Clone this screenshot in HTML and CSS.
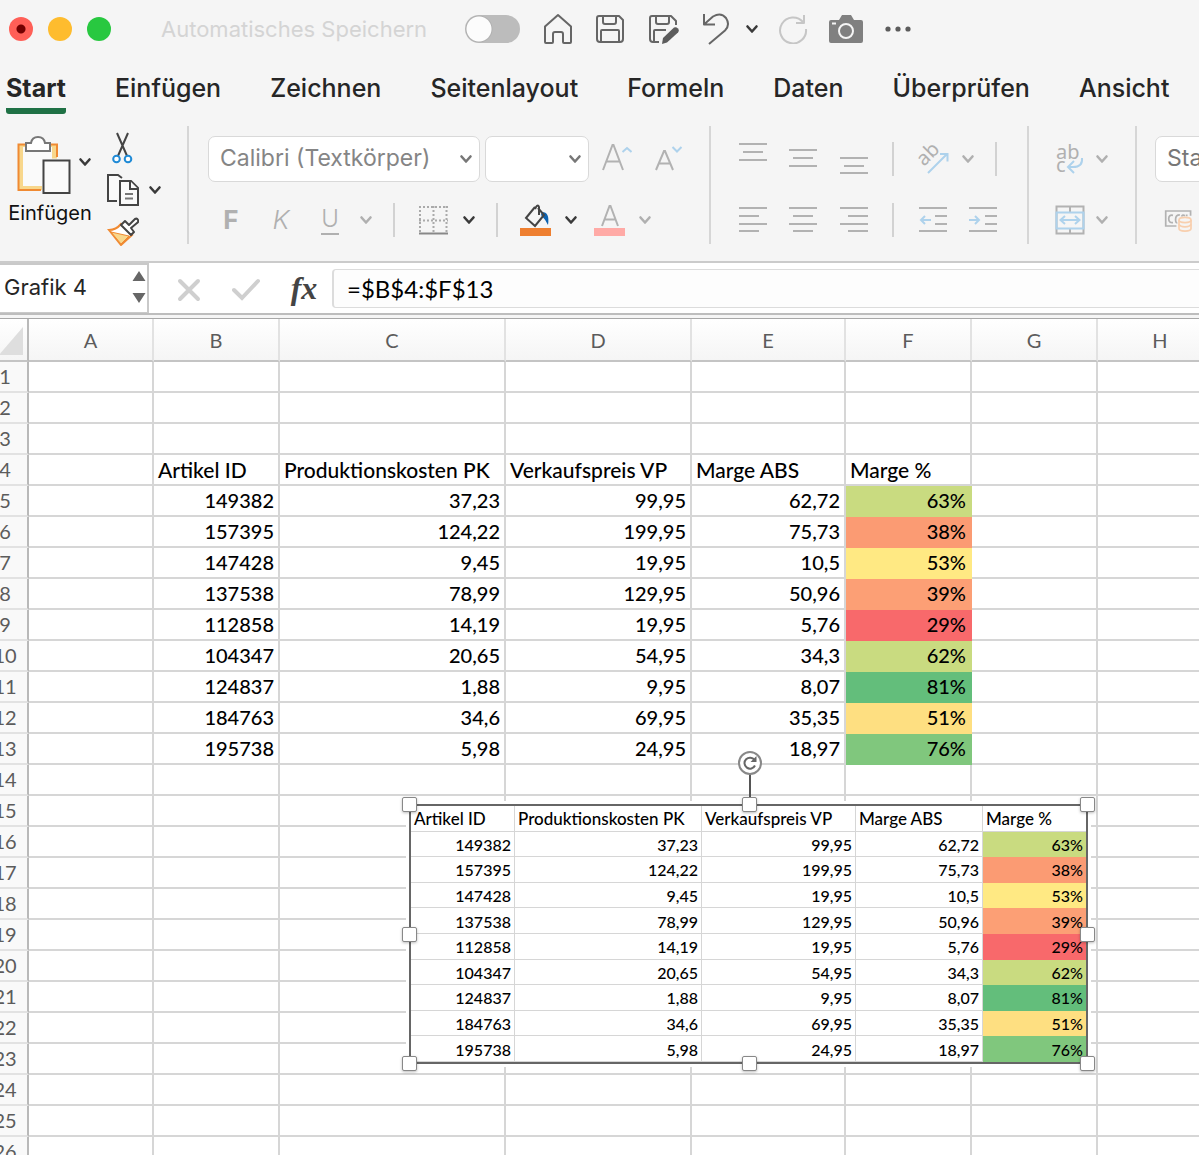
FILE: index.html
```html
<!DOCTYPE html>
<html lang="de">
<head>
<meta charset="utf-8">
<meta name="viewport" content="width=device-width, initial-scale=1">
<title>Tabelle</title>
<link rel="stylesheet" href="styles.css">
</head>
<body>
<svg class="defs" aria-hidden="true">
  <symbol id="chev" viewBox="0 0 14 10"><path d="M2.500 2.500 7 7.500l4.500-5" fill="none" stroke="currentColor" stroke-width="2.600" stroke-linecap="round" stroke-linejoin="round"/></symbol>
</svg>

<header class="titlebar">
  <div class="lights">
    <button class="light close" aria-label="Schließen"></button>
    <button class="light minimize" aria-label="Minimieren"></button>
    <button class="light zoom" aria-label="Zoomen"></button>
  </div>
  <label class="autosave"><span>Automatisches Speichern</span><input type="checkbox" disabled></label>
  <div class="quick">
    <button aria-label="Startseite"><svg width="30" height="32" viewBox="0 0 30 32"><path d="M2 13.500 15 2l13 11.500V29q0 1-1 1h-6q-1 0-1-1v-8q0-2-2-2h-6q-2 0-2 2v8q0 1-1 1H3q-1 0-1-1z"/></svg></button>
    <button aria-label="Speichern"><svg width="30" height="30" viewBox="0 0 30 30"><path d="M4 2h20l4 4v19q0 3-3 3H5q-3 0-3-3V4q0-2 2-2zM8 2v6q0 2 2 2h9q2 0 2-2V2M6 28V17q0-1 1-1h16q1 0 1 1v11"/></svg></button>
    <button aria-label="Kopie speichern"><svg width="31" height="30" viewBox="0 0 31 30"><path d="M11 28H5q-3 0-3-3V4q0-2 2-2h19l5 5v4M8 2v6q0 2 2 2h9q2 0 2-2V2M6 28V17q0-1 1-1h11"/><path class="solid" d="M14 30l1-6L26 13.500q2-1 4 1 1.500 2 0 4L19 28.500z"/></svg></button>
    <button aria-label="Rückgängig"><svg width="28" height="32" viewBox="0 0 28 32"><path d="M2 1v10.500h11M2.500 11 11 3.500q8-4.500 13 1.500 4.500 7-1 12.500L7 31"/></svg></button>
    <button class="dark" aria-label="Rückgängig-Liste"><svg width="14" height="10"><use href="#chev"/></svg></button>
    <button class="faint" aria-label="Wiederholen"><svg width="30" height="30" viewBox="0 0 30 30"><path d="M25 8A13 13 0 1 0 28 15M26 1v8h-8"/></svg></button>
    <button aria-label="Kamera"><svg width="36" height="30" viewBox="0 0 36 30"><path class="body" d="M3 6h8l3-5h9l3 5h7q2 0 2 2v19q0 2-2 2H3q-2 0-2-2V8q0-2 2-2z"/><circle class="cut" cx="18" cy="17" r="7"/><path class="cut" d="M4 9.500h4"/></svg></button>
    <button aria-label="Mehr"><svg width="26" height="8" viewBox="0 0 26 8"><circle class="solid" cx="3" cy="4" r="2.600"/><circle class="solid" cx="13" cy="4" r="2.600"/><circle class="solid" cx="23" cy="4" r="2.600"/></svg></button>
  </div>
</header>

<nav class="tabs">
  <a href="#start" class="active">Start</a>
  <a href="#einfuegen">Einfügen</a>
  <a href="#zeichnen">Zeichnen</a>
  <a href="#seitenlayout">Seitenlayout</a>
  <a href="#formeln">Formeln</a>
  <a href="#daten">Daten</a>
  <a href="#ueberpruefen">Überprüfen</a>
  <a href="#ansicht">Ansicht</a>
</nav>

<section class="ribbon" id="start">
  <div class="group clipboard">
    <button class="paste">
      <span class="paste-icon">
        <svg width="54" height="60" viewBox="0 0 54 60"><path d="M1.500 8.500H40v14H25V54H1.500z" fill="#f8d78c"/><path d="M6 11h29v12H25v27H6z" fill="#fafafa"/><path d="M40 21V8.500H1.500V54H24" fill="none" stroke="#f08a32" stroke-width="2"/><path d="M9 15V7h5q1-6 7-6t7 6h5v8z" fill="#fff" stroke="#777" stroke-width="2"/><path d="M26.500 24.500h26V57h-26z" fill="#fafafa" stroke="#444" stroke-width="2"/></svg>
        <svg class="dark chev" width="14" height="10"><use href="#chev"/></svg>
      </span>
      <span>Einfügen</span>
    </button>
    <div class="clip-tools">
      <button aria-label="Ausschneiden"><svg width="32" height="32" viewBox="0 0 32 32"><path d="M10 1l10.500 24M21 1 10.500 25" stroke="#444" stroke-width="2" fill="none"/><g fill="#fff" stroke="#1f8ad6" stroke-width="2"><circle cx="9.500" cy="27" r="3.300"/><circle cx="21" cy="27" r="3.300"/></g></svg></button>
      <button aria-label="Kopieren"><svg width="32" height="32" viewBox="0 0 32 32"><g fill="#fafafa" stroke="#444" stroke-width="2"><path d="M10 27H1V1h10l4 3" /><path d="M13 7h11l7 7v17H13z"/><path d="M23 7v8h8"/></g><path d="M18 20h8M18 24.500h8" stroke="#777" stroke-width="2"/></svg><svg class="dark" width="14" height="10"><use href="#chev"/></svg></button>
      <button aria-label="Format übertragen"><svg width="32" height="30" viewBox="0 0 32 30"><path d="M2 14q7 0 12-6l11 11-11 10z" fill="#fff" stroke="#f08a32" stroke-width="2"/><path d="M4 16l18 4-8 8z" fill="#f8d78c" stroke="#f08a32"/><path d="M14 9l4-4 4 4 6-6q2-1 3 1t-1 3l-6 5 3 4-3 3z" fill="#fff" stroke="#444" stroke-width="2" stroke-linejoin="round"/></svg></button>
    </div>
  </div>

  <div class="group font">
    <div class="row font-pick">
      <span class="pick"><select aria-label="Schriftart"><option>Calibri (Textkörper)</option></select><svg width="14" height="10"><use href="#chev"/></svg></span>
      <span class="pick"><select aria-label="Schriftgrad"><option></option></select><svg width="14" height="10"><use href="#chev"/></svg></span>
      <button aria-label="Schrift vergrößern"><svg width="30" height="32" viewBox="0 0 30 32"><path d="M1 27 10.500 2h1L21 27M4.500 18.500h13" class="g"/><path d="M20.500 9l4.500-4 4.500 4" class="b"/></svg></button>
      <button aria-label="Schrift verkleinern"><svg width="28" height="32" viewBox="0 0 28 32"><path d="M1 27 9 8h1l8 19M4 20.500h11" class="g"/><path d="M17.500 4 22 8.500 26.500 4" class="b"/></svg></button>
    </div>
    <div class="row font-style">
      <button class="letter bold" aria-label="Fett">F</button>
      <button class="letter italic" aria-label="Kursiv">K</button>
      <button class="letter under" aria-label="Unterstrichen">U</button>
      <button aria-label="Unterstreichungsart"><svg width="14" height="10"><use href="#chev"/></svg></button>
      <i class="sep"></i>
      <button aria-label="Rahmen"><svg width="30" height="30" viewBox="0 0 30 30"><path d="M1 2h29M1 15.500h29M2 1v26M15.500 1v26M28.500 1v26" stroke="#aaa" stroke-width="2" stroke-dasharray="2 2" fill="none"/><path d="M1 28.500h29" stroke="#888" stroke-width="2"/></svg></button>
      <button class="dark" aria-label="Rahmenart"><svg width="14" height="10"><use href="#chev"/></svg></button>
      <i class="sep"></i>
      <button aria-label="Füllfarbe"><svg width="32" height="32" viewBox="0 0 32 32"><path d="M22 8q8 0 6 13-3-6-7-10z" fill="#0d62b0"/><path d="M15 3 6 14l9 8 9-11-6-7M19 11V3q-1-3-3 0l-1 2" fill="none" stroke="#444" stroke-width="2"/><path d="M0 24h31v8H0z" fill="#ee7f30"/></svg></button>
      <button class="dark" aria-label="Füllfarben"><svg width="14" height="10"><use href="#chev"/></svg></button>
      <button aria-label="Schriftfarbe"><svg width="32" height="32" viewBox="0 0 32 32"><path d="M8 22 15.500 2h1L24 22M10.500 15.500h11" class="g"/><path d="M0 24h31v8H0z" fill="#ffaaa6"/></svg></button>
      <button aria-label="Schriftfarben"><svg width="14" height="10"><use href="#chev"/></svg></button>
    </div>
  </div>

  <div class="group align">
    <div class="row align-v">
      <button aria-label="Oben ausrichten"><svg width="28" height="36" viewBox="0 0 28 36"><path d="M0 3h28M4 11h20M0 19h28" class="g"/></svg></button>
      <button aria-label="Zentriert ausrichten"><svg width="28" height="36" viewBox="0 0 28 36"><path d="M0 9h28M4 17h20M0 25h28" class="g"/></svg></button>
      <button aria-label="Unten ausrichten"><svg width="28" height="36" viewBox="0 0 28 36"><path d="M0 17h28M4 25h20M0 32h28" class="g"/></svg></button>
      <i class="sep"></i>
      <button aria-label="Ausrichtung"><svg width="34" height="34" viewBox="0 0 34 34"><text x="0" y="0" transform="translate(8 25) rotate(-45)">ab</text><path d="M12 31 31 12M24 12h7.500v7.500" class="b"/></svg></button>
      <button aria-label="Ausrichtungsart"><svg width="14" height="10"><use href="#chev"/></svg></button>
      <i class="sep"></i>
    </div>
    <div class="row align-h">
      <button aria-label="Linksbündig"><svg width="28" height="28" viewBox="0 0 28 28"><path d="M0 2h28M0 10h20M0 18h28M0 25h20" class="g"/></svg></button>
      <button aria-label="Zentriert"><svg width="28" height="28" viewBox="0 0 28 28"><path d="M0 2h28M4 10h20M0 18h28M4 25h20" class="g"/></svg></button>
      <button aria-label="Rechtsbündig"><svg width="28" height="28" viewBox="0 0 28 28"><path d="M0 2h28M8 10h20M0 18h28M8 25h20" class="g"/></svg></button>
      <i class="sep"></i>
      <button aria-label="Einzug verkleinern"><svg width="28" height="28" viewBox="0 0 28 28"><path d="M0 2h28M16 10h12M16 18h12M0 25h28" class="g"/><path d="M12 14H2M6 10l-4 4 4 4" class="b"/></svg></button>
      <button aria-label="Einzug vergrößern"><svg width="28" height="28" viewBox="0 0 28 28"><path d="M0 2h28M16 10h12M16 18h12M0 25h28" class="g"/><path d="M0 14h10M6 10l4 4-4 4" class="b"/></svg></button>
    </div>
  </div>

  <div class="group wrap">
    <div class="row wrap-cols">
      <button aria-label="Zeilenumbruch"><svg width="28" height="34" viewBox="0 0 28 34"><text x="0" y="17">ab</text><text x="0" y="30">c</text><path d="M26 16q1 9-9 9h-4M18 19l-6 6 6 6" class="b"/></svg></button>
      <button aria-label="Umbruchart"><svg width="14" height="10"><use href="#chev"/></svg></button>
    </div>
    <div class="row wrap-cols">
      <button aria-label="Verbinden"><svg width="30" height="30" viewBox="0 0 30 30"><path d="M1.500 1.500h27v27h-27zM15 1v6M15 23v6" class="g"/><path d="M1.500 7.500h27v16h-27zM6 15h18M10 11l-4.500 4 4.500 4M20 11l4.500 4-4.500 4" class="b"/></svg></button>
      <button aria-label="Verbindungsart"><svg width="14" height="10"><use href="#chev"/></svg></button>
    </div>
  </div>

  <div class="group number">
    <div class="row"><span class="pick"><select aria-label="Zahlenformat"><option>Standard</option></select><svg width="14" height="10"><use href="#chev"/></svg></span></div>
    <div class="row"><button class="currency" aria-label="Währung"><svg width="34" height="24" viewBox="0 0 34 28"><path d="M14 21H1.500V3.500h29V9M10 8.500q-5-1-5 4t5 4.500M18 8q-5 0-5 5t2 4M20 10q1-3 4-1M26 7.500v2" class="g"/><path d="M17 14v10q0 3 7 3t7-3V14" fill="#f5f5f5" stroke="#f8cfae" stroke-width="2"/><ellipse cx="24" cy="14" rx="7" ry="3" fill="#f5f5f5" stroke="#f8cfae" stroke-width="2"/><path d="M17 19q1 3 7 3t7-3" fill="none" stroke="#f8cfae" stroke-width="2"/></svg></button></div>
  </div>
</section>

<section class="formula-bar">
  <div class="namebox">
    <input aria-label="Namenfeld" value="Grafik 4">
    <svg width="14" height="34" viewBox="0 0 14 34"><path d="M7 1l6.500 10h-13zM7 33 .5 23h13z" fill="#666"/></svg>
  </div>
  <button aria-label="Abbrechen"><svg width="24" height="24" viewBox="0 0 24 24"><path d="M3 3l18 18M21 3 3 21" class="mark"/></svg></button>
  <button aria-label="Eingeben"><svg width="28" height="24" viewBox="0 0 28 24"><path d="M2 12l8 8L26 3" class="mark"/></svg></button>
  <button class="fx" aria-label="Funktion einfügen">fx</button>
  <input class="formula" aria-label="Formel" value="=$B$4:$F$13">
</section>

<main class="sheet">
  <table class="grid">
    <colgroup><col class="c-row"><col class="c-a"><col class="c-b"><col class="c-c"><col class="c-d"><col class="c-e"><col class="c-f"><col class="c-g"><col></colgroup>
    <thead><tr><th><svg width="24" height="28" viewBox="0 0 24 28"><path d="M24 0v28H0z" fill="#dedede"/></svg></th><th>A</th><th>B</th><th>C</th><th>D</th><th>E</th><th>F</th><th>G</th><th>H</th></tr></thead>
    <tbody>
      <tr><th>1</th><td><td><td><td><td><td><td><td></tr>
      <tr><th>2</th><td><td><td><td><td><td><td><td></tr>
      <tr><th>3</th><td><td><td><td><td><td><td><td></tr>
      <tr class="names"><th>4</th><td><td>Artikel ID<td>Produktionskosten PK<td>Verkaufspreis VP<td>Marge ABS<td>Marge %<td><td></tr>
      <tr><th>5</th><td><td>149382<td>37,23<td>99,95<td>62,72<td class="s s63">63%<td><td></tr>
      <tr><th>6</th><td><td>157395<td>124,22<td>199,95<td>75,73<td class="s s38">38%<td><td></tr>
      <tr><th>7</th><td><td>147428<td>9,45<td>19,95<td>10,5<td class="s s53">53%<td><td></tr>
      <tr><th>8</th><td><td>137538<td>78,99<td>129,95<td>50,96<td class="s s39">39%<td><td></tr>
      <tr><th>9</th><td><td>112858<td>14,19<td>19,95<td>5,76<td class="s s29">29%<td><td></tr>
      <tr><th>10</th><td><td>104347<td>20,65<td>54,95<td>34,3<td class="s s63">62%<td><td></tr>
      <tr><th>11</th><td><td>124837<td>1,88<td>9,95<td>8,07<td class="s s81">81%<td><td></tr>
      <tr><th>12</th><td><td>184763<td>34,6<td>69,95<td>35,35<td class="s s51">51%<td><td></tr>
      <tr><th>13</th><td><td>195738<td>5,98<td>24,95<td>18,97<td class="s s76">76%<td><td></tr>
      <tr><th>14</th><td><td><td><td><td><td><td><td></tr>
      <tr><th>15</th><td><td><td><td><td><td><td><td></tr>
      <tr><th>16</th><td><td><td><td><td><td><td><td></tr>
      <tr><th>17</th><td><td><td><td><td><td><td><td></tr>
      <tr><th>18</th><td><td><td><td><td><td><td><td></tr>
      <tr><th>19</th><td><td><td><td><td><td><td><td></tr>
      <tr><th>20</th><td><td><td><td><td><td><td><td></tr>
      <tr><th>21</th><td><td><td><td><td><td><td><td></tr>
      <tr><th>22</th><td><td><td><td><td><td><td><td></tr>
      <tr><th>23</th><td><td><td><td><td><td><td><td></tr>
      <tr><th>24</th><td><td><td><td><td><td><td><td></tr>
      <tr><th>25</th><td><td><td><td><td><td><td><td></tr>
      <tr><th>26</th><td><td><td><td><td><td><td><td></tr>
    </tbody>
  </table>

  <figure class="linked">
    <table>
      <colgroup><col class="l-a"><col class="l-b"><col class="l-c"><col class="l-d"><col></colgroup>
      <tr class="names"><td>Artikel ID<td>Produktionskosten PK<td>Verkaufspreis VP<td>Marge ABS<td>Marge %</tr>
      <tr><td>149382<td>37,23<td>99,95<td>62,72<td class="s s63">63%</tr>
      <tr><td>157395<td>124,22<td>199,95<td>75,73<td class="s s38">38%</tr>
      <tr><td>147428<td>9,45<td>19,95<td>10,5<td class="s s53">53%</tr>
      <tr><td>137538<td>78,99<td>129,95<td>50,96<td class="s s39">39%</tr>
      <tr><td>112858<td>14,19<td>19,95<td>5,76<td class="s s29">29%</tr>
      <tr><td>104347<td>20,65<td>54,95<td>34,3<td class="s s63">62%</tr>
      <tr><td>124837<td>1,88<td>9,95<td>8,07<td class="s s81">81%</tr>
      <tr><td>184763<td>34,6<td>69,95<td>35,35<td class="s s51">51%</tr>
      <tr><td>195738<td>5,98<td>24,95<td>18,97<td class="s s76">76%</tr>
    </table>
    <i class="stem"></i>
    <svg class="rotate" width="26" height="26" viewBox="0 0 26 26"><circle cx="13" cy="13" r="11" fill="#fff" stroke="#888" stroke-width="2"/><path d="M17.500 10A5.500 5.500 0 1 0 18 15.500" fill="none" stroke="#666" stroke-width="2"/><path d="M19.500 6v6h-6z" fill="#666"/></svg>
    <i class="handle top left"></i><i class="handle top mid"></i><i class="handle top right"></i>
    <i class="handle center left"></i><i class="handle center right"></i>
    <i class="handle bottom left"></i><i class="handle bottom mid"></i><i class="handle bottom right"></i>
  </figure>
</main>
</body>
</html>
```
FILE: styles.css
```css
:root {
  --ui: Inter, "Liberation Sans", sans-serif;
  --cell: Lato, "Noto Sans", sans-serif;
  --line: #d6d6d6;
}

* { box-sizing: border-box; }

body {
  margin: 0;
  height: 100vh;
  display: flex;
  flex-direction: column;
  overflow: hidden;
  background: #f5f5f5;
  color: #262626;
  font-family: var(--ui);
}

button, input, select { font: inherit; color: inherit; }
button {
  padding: 0;
  border: 0;
  background: none;
  display: flex;
  align-items: center;
  justify-content: center;
}
svg { display: block; flex: none; }
.defs { position: absolute; width: 0; height: 0; }
.dark { color: #3a3a3a; }

.titlebar {
  flex: none;
  display: flex;
  align-items: center;
  height: 58px;
  padding-left: 9px;
}
.lights { display: flex; gap: 15px; }
.light {
  width: 24px;
  height: 24px;
  border-radius: 50%;
}
.close { background: radial-gradient(circle, #730000 0 4px, #ff5f57 5px); }
.minimize { background: #febc2e; }
.zoom { background: #28c840; }

.autosave {
  display: flex;
  align-items: center;
  gap: 38px;
  margin-left: 50px;
  color: #d4d4d4;
  font-size: 22px;
  white-space: nowrap;
}
.autosave input {
  appearance: none;
  width: 55px;
  height: 28px;
  margin: 0;
  border-radius: 14px;
  background: radial-gradient(circle at 14px 14px, #fcfcfc 0 12px, #b0b0b0 13px, transparent 14px), #bcbcbc;
}

.quick {
  display: grid;
  grid-template-columns: 52px 52px 54px 51px 22px 60px 45px 60px;
  margin-left: 12px;
}
.quick path, .quick circle { fill: none; stroke: #666; stroke-width: 2; stroke-linejoin: round; }
.quick .solid { fill: #5c5c5c; stroke: none; }
.quick .body { fill: #808080; stroke: none; }
.quick .cut { stroke: #f5f5f5; }
.quick .faint path { stroke: #c6c6c6; }

.tabs {
  flex: none;
  display: flex;
  gap: 49px;
  height: 60px;
  padding: 12px 6px 0;
  font-size: 25px;
  line-height: 36px;
  font-weight: 500;
}
.tabs a {
  height: 44px;
  color: inherit;
  text-decoration: none;
  white-space: nowrap;
}
.tabs .active {
  font-weight: 700;
  background: linear-gradient(#1f7145, #1f7145) bottom / 100% 6px no-repeat;
  border-radius: 3px;
}

.ribbon {
  flex: none;
  display: flex;
  height: 145px;
  padding: 8px 0 17px;
  border-bottom: 2px solid #cbcbcb;
  overflow: hidden;
}
.group {
  flex: none;
  display: flex;
  flex-direction: column;
  gap: 21px;
  padding: 10px 18px 0;
  border-right: 2px solid #d6d6d6;
  color: #b0b0b0;
}
.group:last-child { border: 0; }
.g { fill: none; stroke: #b2b2b2; stroke-width: 2; }
.b { fill: none; stroke: #aed2ec; stroke-width: 2; }
.group text { fill: #b0b0b0; font: 20px "Noto Sans", sans-serif; }

.clipboard {
  width: 189px;
  flex-direction: row;
  gap: 15px;
  padding: 6px 0 0 8px;
}
.paste {
  width: 84px;
  flex-direction: column;
  align-items: stretch;
  justify-content: flex-start;
  gap: 4px;
  padding-top: 4px;
  color: #111;
  font-size: 20px;
  line-height: 26px;
}
.paste-icon { display: flex; align-items: center; gap: 7px; padding-left: 9px; }
.paste-icon .chev { margin-bottom: 8px; }
.clip-tools { display: flex; flex-direction: column; gap: 10px; }
.clip-tools button { gap: 9px; align-self: flex-start; }

.row { display: grid; align-items: center; height: 34px; }
.row:first-child { height: 46px; }
.sep { justify-self: center; width: 2px; height: 34px; background: #d2d2d2; }
.font { width: 522px; padding-left: 19px; }
.font-pick { grid-template-columns: 272px 109px 56px 48px; }
.font-pick .pick:nth-child(2) { margin: 0 0 0 5px; }
.font-style { grid-template-columns: 46px 54px 44px 28px 28px 50px 22px 34px 44px 26px 52px 18px; }
.align { width: 318px; padding: 10px 0 0 17px; }
.align-v { grid-template-columns: 50px 50px 52px 26px 54px 16px 40px; }
.align-h { grid-template-columns: 50px 50px 52px 26px 54px 46px; }
.wrap { width: 108px; padding: 10px 0 0 20px; }
.wrap-cols { grid-template-columns: 42px 22px; }
.number { padding-right: 0; }

.pick { display: grid; align-items: center; color: #777; }
.pick > * { grid-area: 1 / 1; }
.pick svg { justify-self: end; margin-right: 7px; pointer-events: none; }
.pick select {
  appearance: none;
  width: 100%;
  height: 46px;
  padding: 0 28px 2px 11px;
  border: 1px solid #d9d9d9;
  border-radius: 7px;
  background: #fff;
  color: #858585;
  font-size: 23px;
}
.number .pick select { width: 150px; color: #777; }
.currency { justify-self: start; margin-left: 7px; }
.letter { font-size: 26px; line-height: 32px; }
.bold { font-weight: 700; }
.italic { font-style: italic; font-weight: 300; }
.under {
  justify-self: center;
  width: 18px;
  height: 30px;
  border-bottom: 2px solid #b0b0b0;
  font-size: 24px;
  font-weight: 300;
}

.formula-bar {
  flex: none;
  display: flex;
  align-items: center;
  height: 52px;
  background: #fff;
  border-bottom: 2px solid #bdbdbd;
}
.namebox {
  display: flex;
  align-items: center;
  width: 149px;
  height: 50px;
  padding: 0 1px 3px 0;
  border: solid #c9c9c9;
  border-width: 2px 2px 1px 0;
}
.namebox input {
  flex: 1;
  min-width: 0;
  padding: 0 4px;
  border: 0;
  background: none;
  font-size: 22px;
}
.formula-bar button { width: 28px; margin-left: 26px; padding-top: 4px; }
.formula-bar button + button { margin-left: 29px; }
.formula-bar .fx {
  margin: 0 14px 0 30px;
  padding-top: 0;
  color: #444;
  font: italic 700 32px/40px "Liberation Serif", serif;
}
.mark { fill: none; stroke: #cfcfcf; stroke-width: 4; stroke-linecap: round; }
.formula {
  flex: 1;
  min-width: 0;
  height: 39px;
  padding: 0 13px;
  border: 1px solid #dcdcdc;
  border-width: 1px 0 1px 2px;
  border-radius: 4px 0 0 4px;
  background: #fdfdfd;
  color: #000;
  font-family: var(--cell);
  font-size: 24px;
}

.sheet {
  flex: 1;
  min-height: 0;
  position: relative;
  overflow: hidden;
  margin-top: 3px;
  border-top: 1px solid #a8a8a8;
  background: #fff;
}
.sheet table {
  table-layout: fixed;
  border-spacing: 0;
  color: #000;
  font-family: var(--cell);
  font-weight: 500;
}
.sheet td {
  padding: 0 4px;
  border: solid var(--line);
  border-width: 0 2px 2px 0;
  text-align: right;
  white-space: nowrap;
}
.sheet .names td { text-align: left; }

/* The sheet is scrolled a little to the right, which cuts the row numbers;
   the last column runs on past the window's edge. */
.grid {
  width: calc(100% + 42px);
  margin-left: -17px;
  font-size: 20px;
  line-height: 29px;
}
.grid .names td { font-size: 21px; }
.grid th {
  padding: 0;
  border: solid #e2e2e2;
  border-width: 0 2px 2px 0;
  background: #f9f9f9;
  color: #5c5c5c;
  font-weight: 400;
}
.grid tbody th { border-right-color: #b9b9b9; }
.grid tbody tr { height: 31px; }
.grid thead tr { height: 43px; }
.grid thead th { padding-top: 2px; border-bottom-color: #c4c4c4; background: linear-gradient(#fff, #f5f5f5); }
.grid thead th:first-child { border-right-color: #b9b9b9; }
.grid thead svg { margin-left: 16px; }
.grid td { height: 31px; }
.c-row { width: 46px; }
.c-a { width: 125px; }
.c-b, .c-f, .c-g { width: 126px; }
.c-c { width: 226px; }
.c-d { width: 186px; }
.c-e { width: 154px; }

.sheet .s63 { background: #c9db80; border-color: #c9db80; }
.sheet .s38 { background: #fb9b73; border-color: #fb9b73; }
.sheet .s53 { background: #ffe983; border-color: #ffe983; }
.sheet .s39 { background: #fc9f75; border-color: #fc9f75; }
.sheet .s29 { background: #f8696b; border-color: #f8696b; }
.sheet .s81 { background: #63be7b; border-color: #63be7b; }
.sheet .s51 { background: #fedf81; border-color: #fedf81; }
.sheet .s76 { background: #80c77d; border-color: #80c77d; }

/* Linked picture of B4:F13, placed freely over the sheet. */
.linked {
  position: absolute;
  left: 409px;
  top: 485px;
  width: 679px;
  margin: 0;
  border: 2px solid #666;
  background: #fff;
  box-shadow: 0 0 0 3px #fff;
}
.linked table { width: 100%; height: 256px; font-size: 16px; line-height: 20px; }
.linked td { padding: 2px 3px 0; border-width: 0 1px 1px 0; }
.linked .names td { font-size: 17px; }
.linked td:last-child { border-right: 0; }
.l-a { width: 104px; }
.l-b { width: 187px; }
.l-c { width: 154px; }
.l-d { width: 127px; }
.handle {
  position: absolute;
  width: 15px;
  height: 15px;
  border: 1px solid #888;
  border-radius: 2px;
  background: #fff;
  box-shadow: 0 1px 3px #0004;
}
.top { top: -9px; }
.center { top: calc(50% - 7px); }
.bottom { bottom: -9px; }
.left { left: -9px; }
.mid { left: calc(50% - 7px); }
.right { right: -9px; }
.stem {
  position: absolute;
  left: 50%;
  top: -34px;
  width: 2px;
  height: 32px;
  background: #555;
}
.rotate { position: absolute; left: calc(50% - 12px); top: -56px; }
```
